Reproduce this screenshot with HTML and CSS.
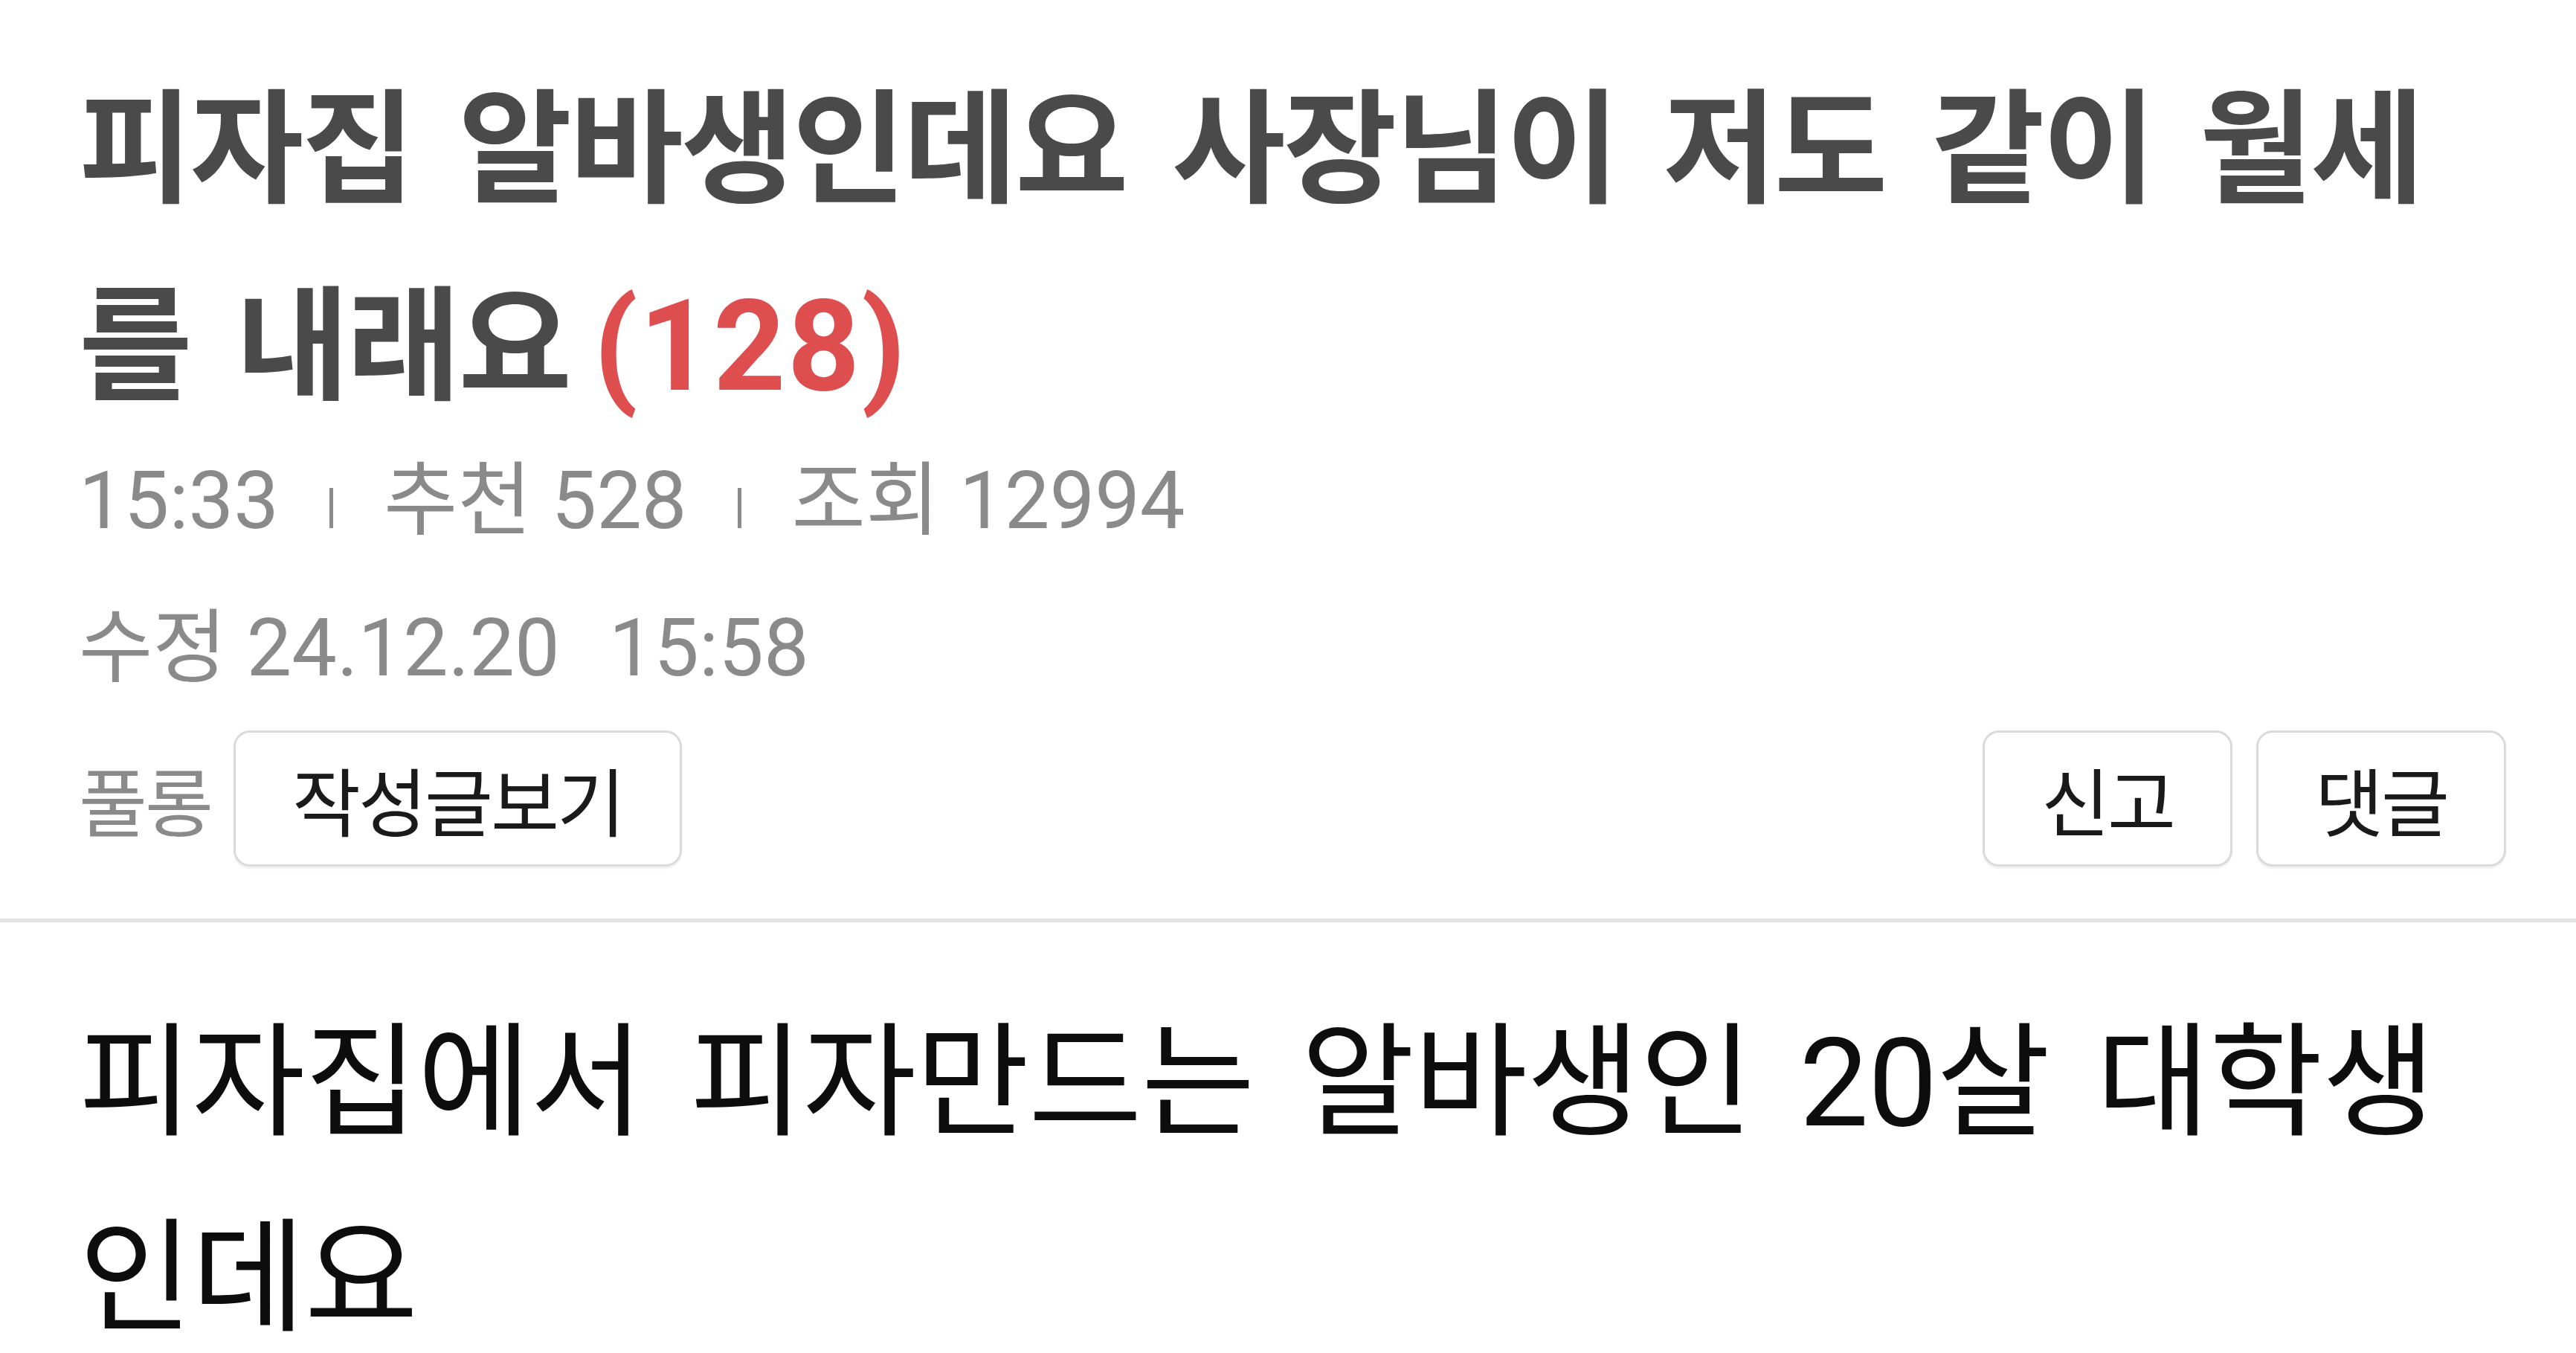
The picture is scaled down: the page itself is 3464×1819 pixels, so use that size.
FILE: index.html
```html
<!DOCTYPE html>
<html lang="ko">
<head>
<meta charset="utf-8">
<title>피자집 알바생인데요 사장님이 저도 같이 월세를 내래요</title>
<link rel="stylesheet" href="styles.css">
</head>
<body>
<main class="post">
  <header class="post-head">
    <h1 class="title">피자집 알바생인데요 사장님이 저도 같이 월세를 내래요<span class="count">(128)</span></h1>
    <div class="meta">15:33<span class="sep"></span>추천 528<span class="sep"></span>조회 12994</div>
    <div class="meta meta-edit">수정 24.12.20<span class="gap"></span>15:58</div>
    <div class="actions">
      <div class="author">
        <span class="nick">풀롱</span>
        <button class="btn" type="button">작성글보기</button>
      </div>
      <div class="tools">
        <button class="btn" type="button">신고</button>
        <button class="btn" type="button">댓글</button>
      </div>
    </div>
  </header>
  <article class="post-body">
    <p class="text">피자집에서 피자만드는 알바생인 20살 대학생인데요</p>
  </article>
</main>
</body>
</html>
```
FILE: styles.css
```css
html, body {
  margin: 0;
  padding: 0;
  background: #ffffff;
}

body {
  font-family: "Roboto", "Noto Sans CJK KR", sans-serif;
  color: #111111;
}

.post-head {
  padding: 70px 94px 70px 106px;
  border-bottom: 5px solid #e2e2e2;
}

.title {
  margin: 0 30px 0 0;
  font-size: 166px;
  font-weight: 700;
  line-height: 265px;
  letter-spacing: -3px;
  word-spacing: 23px;
  color: #4a4a4a;
}

.count {
  margin-left: 32px;
  font-size: 170px;
  font-weight: 700;
  line-height: 1;
  letter-spacing: 2px;
  color: #de4e4e;
}

.meta {
  font-size: 108px;
  line-height: 146px;
  color: #8a8a8a;
}

.meta-edit {
  margin-top: 52px;
}

.sep {
  display: inline-block;
  width: 5px;
  height: 54px;
  margin: 0 68px;
  background: #8c8c8c;
  vertical-align: baseline;
}

.gap {
  display: inline-block;
  width: 66px;
}

.actions {
  margin-top: 38px;
  display: flex;
  justify-content: space-between;
  align-items: center;
}

.author {
  display: flex;
  align-items: center;
  gap: 30px;
}

.nick {
  font-size: 100px;
  letter-spacing: -3px;
  color: #8a8a8a;
}

.tools {
  display: flex;
  gap: 32px;
}

.btn {
  box-sizing: border-box;
  height: 183px;
  padding: 0 76px;
  display: inline-flex;
  align-items: center;
  justify-content: center;
  font-family: "Roboto", "Noto Sans CJK KR", sans-serif;
  font-size: 100px;
  letter-spacing: -3px;
  color: #1a1a1a;
  background: #ffffff;
  border: 3px solid #dadada;
  border-radius: 22px;
  box-shadow: 0 3px 2px rgba(0, 0, 0, 0.06);
}

.post-body {
  padding: 85px 94px 0 106px;
}

.text {
  margin: 0 30px 0 0;
  font-size: 166px;
  font-weight: 400;
  line-height: 263px;
  letter-spacing: -1px;
  word-spacing: 23px;
  color: #0d0d0d;
}
```
